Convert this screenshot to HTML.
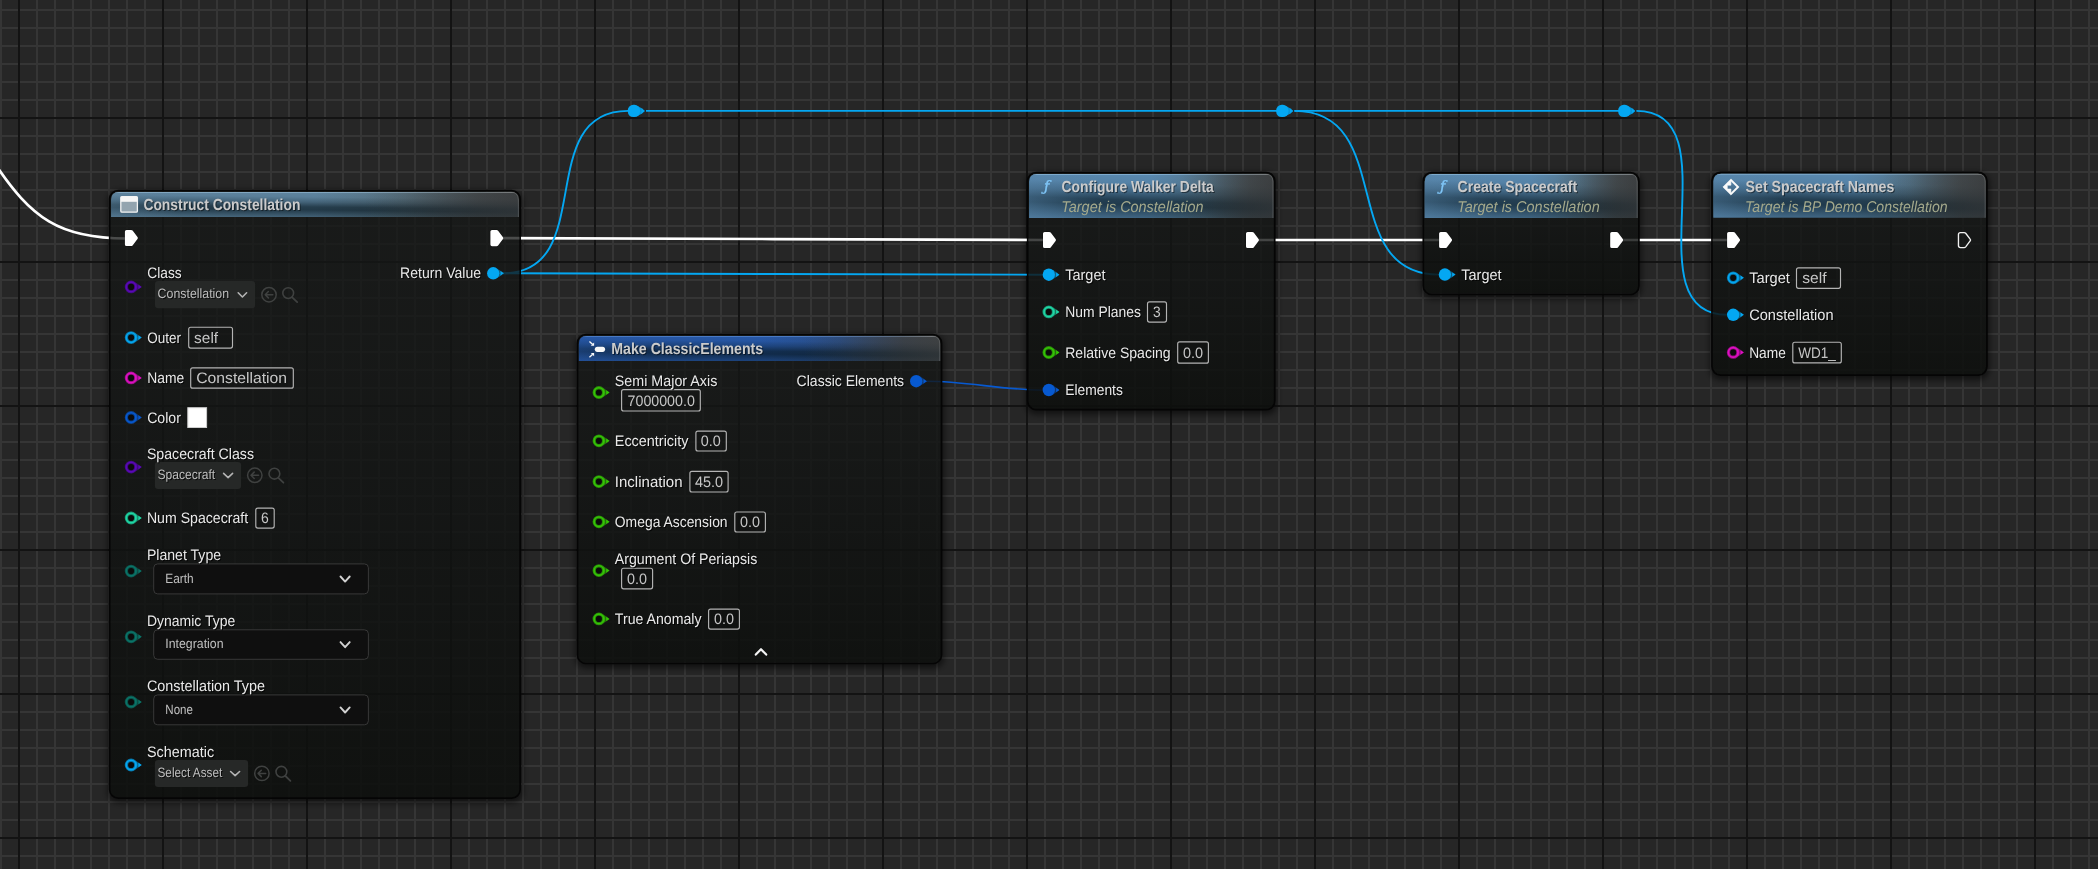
<!DOCTYPE html>
<html lang="en">
<head>
<meta charset="utf-8">
<title>Blueprint Graph</title>
<style>
html,body{margin:0;padding:0;background:#262626;overflow:hidden}
body{width:2098px;height:869px}
svg{display:block;font-family:"Liberation Sans", sans-serif;text-rendering:geometricPrecision;will-change:transform}
</style>
</head>
<body>
<svg width="2098" height="869" viewBox="0 0 2098 869">
<defs>
<filter id="blur" x="-10%" y="-10%" width="120%" height="120%"><feGaussianBlur stdDeviation="3.4"/></filter>
<pattern id="gmin" x="0" y="9" width="18" height="18" patternUnits="userSpaceOnUse"><rect width="18" height="18" fill="#262626"/><rect width="2" height="18" fill="#353535"/><rect width="18" height="2" fill="#353535"/></pattern>
<pattern id="gmaj" x="18" y="117" width="144" height="144" patternUnits="userSpaceOnUse"><rect width="2" height="144" fill="#131313"/><rect width="144" height="2" fill="#131313"/></pattern>
<linearGradient id="body" x1="0" y1="0" x2="0" y2="1"><stop offset="0" stop-color="#151716" stop-opacity="0.76"/><stop offset="0.5" stop-color="#111312" stop-opacity="0.82"/><stop offset="1" stop-color="#0d0f0d" stop-opacity="0.88"/></linearGradient>
<linearGradient id="tshade" x1="0.18" y1="0" x2="0" y2="1"><stop offset="0" stop-color="#06161f" stop-opacity="0"/><stop offset="0.17" stop-color="#06161f" stop-opacity="0.05"/><stop offset="0.36" stop-color="#06161f" stop-opacity="0.30"/><stop offset="0.54" stop-color="#06161f" stop-opacity="0.64"/><stop offset="0.65" stop-color="#06161f" stop-opacity="0.68"/><stop offset="0.82" stop-color="#06161f" stop-opacity="0.45"/><stop offset="1" stop-color="#06161f" stop-opacity="0.2"/></linearGradient>
<linearGradient id="rim" gradientUnits="objectBoundingBox" x1="0" y1="0" x2="1" y2="0"><stop offset="0" stop-color="#fff" stop-opacity="0"/><stop offset="1" stop-color="#fff" stop-opacity="0.16"/></linearGradient>
<linearGradient id="fadeR" x1="0" y1="0" x2="1" y2="0"><stop offset="0" stop-color="#3a3d3f" stop-opacity="0"/><stop offset="0.62" stop-color="#3a3d3f" stop-opacity="0"/><stop offset="1" stop-color="#3a3d3f" stop-opacity="0.62"/></linearGradient>
<clipPath id="tc1"><path d="M111.1 217.0 V199.8 Q111.1 191.9 119.0 191.9 H510.8 Q518.7 191.9 518.7 199.8 V217.0 Z"/></clipPath>
<linearGradient id="th1" x1="0" y1="0" x2="1" y2="0.0"><stop offset="0" stop-color="#5e849f"/><stop offset="0.5" stop-color="#5e849f"/><stop offset="0.72" stop-color="#58717f"/><stop offset="0.9" stop-color="#474d50"/><stop offset="1" stop-color="#3f4142"/></linearGradient>
<linearGradient id="hl1" x1="0" y1="0" x2="1" y2="0"><stop offset="0" stop-color="#93b7d0"/><stop offset="0.6" stop-color="#93b7d0"/><stop offset="1" stop-color="#7c7e7e"/></linearGradient>
<linearGradient id="lf1" gradientUnits="userSpaceOnUse" x1="110.2" y1="0" x2="180.2" y2="0"><stop offset="0" stop-color="#5e849f" stop-opacity="0.42"/><stop offset="1" stop-color="#5e849f" stop-opacity="0"/></linearGradient>
<clipPath id="tc2"><path d="M578.9 361.0 V343.8 Q578.9 335.9 586.8 335.9 H932.2 Q940.1 335.9 940.1 343.8 V361.0 Z"/></clipPath>
<linearGradient id="th2" x1="0" y1="0" x2="1" y2="0.0"><stop offset="0" stop-color="#2758a8"/><stop offset="0.5" stop-color="#2758a8"/><stop offset="0.72" stop-color="#2b4f88"/><stop offset="0.9" stop-color="#3c444f"/><stop offset="1" stop-color="#444646"/></linearGradient>
<linearGradient id="hl2" x1="0" y1="0" x2="1" y2="0"><stop offset="0" stop-color="#5a8ad0"/><stop offset="0.6" stop-color="#5a8ad0"/><stop offset="1" stop-color="#7c7e7e"/></linearGradient>
<linearGradient id="lf2" gradientUnits="userSpaceOnUse" x1="578.0" y1="0" x2="648.0" y2="0"><stop offset="0" stop-color="#2758a8" stop-opacity="0.42"/><stop offset="1" stop-color="#2758a8" stop-opacity="0"/></linearGradient>
<clipPath id="tc3"><path d="M1029.1 218.0 V181.8 Q1029.1 173.9 1037.0 173.9 H1265.4 Q1273.3 173.9 1273.3 181.8 V218.0 Z"/></clipPath>
<linearGradient id="th3" x1="0" y1="0" x2="1" y2="0.0"><stop offset="0" stop-color="#5988ae"/><stop offset="0.5" stop-color="#5988ae"/><stop offset="0.72" stop-color="#55768c"/><stop offset="0.9" stop-color="#474f53"/><stop offset="1" stop-color="#3f4142"/></linearGradient>
<linearGradient id="hl3" x1="0" y1="0" x2="1" y2="0"><stop offset="0" stop-color="#8fbbdc"/><stop offset="0.6" stop-color="#8fbbdc"/><stop offset="1" stop-color="#7c7e7e"/></linearGradient>
<linearGradient id="lf3" gradientUnits="userSpaceOnUse" x1="1028.2" y1="0" x2="1098.2" y2="0"><stop offset="0" stop-color="#5988ae" stop-opacity="0.42"/><stop offset="1" stop-color="#5988ae" stop-opacity="0"/></linearGradient>
<clipPath id="tc4"><path d="M1424.7 218.0 V181.8 Q1424.7 173.9 1432.6 173.9 H1629.6 Q1637.5 173.9 1637.5 181.8 V218.0 Z"/></clipPath>
<linearGradient id="th4" x1="0" y1="0" x2="1" y2="0.0"><stop offset="0" stop-color="#5988ae"/><stop offset="0.5" stop-color="#5988ae"/><stop offset="0.72" stop-color="#55768c"/><stop offset="0.9" stop-color="#474f53"/><stop offset="1" stop-color="#3f4142"/></linearGradient>
<linearGradient id="hl4" x1="0" y1="0" x2="1" y2="0"><stop offset="0" stop-color="#8fbbdc"/><stop offset="0.6" stop-color="#8fbbdc"/><stop offset="1" stop-color="#7c7e7e"/></linearGradient>
<linearGradient id="lf4" gradientUnits="userSpaceOnUse" x1="1423.8" y1="0" x2="1493.8" y2="0"><stop offset="0" stop-color="#5988ae" stop-opacity="0.42"/><stop offset="1" stop-color="#5988ae" stop-opacity="0"/></linearGradient>
<clipPath id="tc5"><path d="M1713.4 217.8 V181.6 Q1713.4 173.7 1721.3 173.7 H1977.6 Q1985.5 173.7 1985.5 181.6 V217.8 Z"/></clipPath>
<linearGradient id="th5" x1="0" y1="0" x2="1" y2="0.0"><stop offset="0" stop-color="#5988ae"/><stop offset="0.5" stop-color="#5988ae"/><stop offset="0.72" stop-color="#55768c"/><stop offset="0.9" stop-color="#474f53"/><stop offset="1" stop-color="#3f4142"/></linearGradient>
<linearGradient id="hl5" x1="0" y1="0" x2="1" y2="0"><stop offset="0" stop-color="#8fbbdc"/><stop offset="0.6" stop-color="#8fbbdc"/><stop offset="1" stop-color="#7c7e7e"/></linearGradient>
<linearGradient id="lf5" gradientUnits="userSpaceOnUse" x1="1712.5" y1="0" x2="1782.5" y2="0"><stop offset="0" stop-color="#5988ae" stop-opacity="0.42"/><stop offset="1" stop-color="#5988ae" stop-opacity="0"/></linearGradient>
</defs>
<rect width="2098" height="869" fill="url(#gmin)"/>
<rect width="2098" height="869" fill="url(#gmaj)"/>
<rect x="107.7" y="190.5" width="414.9" height="612.5" rx="10" fill="#000" fill-opacity="0.55" filter="url(#blur)"/>
<rect x="575.5" y="334.5" width="368.5" height="333.8" rx="10" fill="#000" fill-opacity="0.55" filter="url(#blur)"/>
<rect x="1025.7" y="172.5" width="251.5" height="241.9" rx="10" fill="#000" fill-opacity="0.55" filter="url(#blur)"/>
<rect x="1421.3" y="172.5" width="220.1" height="126.8" rx="10" fill="#000" fill-opacity="0.55" filter="url(#blur)"/>
<rect x="1710.0" y="172.3" width="279.4" height="207.6" rx="10" fill="#000" fill-opacity="0.55" filter="url(#blur)"/>
<rect x="110.2" y="191.0" width="409.4" height="606.5" rx="8" fill="url(#gmin)"/>
<rect x="110.2" y="191.0" width="409.4" height="606.5" rx="8" fill="url(#gmaj)"/>
<rect x="578.0" y="335.0" width="363.0" height="327.8" rx="8" fill="url(#gmin)"/>
<rect x="578.0" y="335.0" width="363.0" height="327.8" rx="8" fill="url(#gmaj)"/>
<rect x="1028.2" y="173.0" width="246.0" height="235.9" rx="8" fill="url(#gmin)"/>
<rect x="1028.2" y="173.0" width="246.0" height="235.9" rx="8" fill="url(#gmaj)"/>
<rect x="1423.8" y="173.0" width="214.6" height="120.8" rx="8" fill="url(#gmin)"/>
<rect x="1423.8" y="173.0" width="214.6" height="120.8" rx="8" fill="url(#gmaj)"/>
<rect x="1712.5" y="172.8" width="273.9" height="201.6" rx="8" fill="url(#gmin)"/>
<rect x="1712.5" y="172.8" width="273.9" height="201.6" rx="8" fill="url(#gmaj)"/>
<path d="M-6 162.4 C31.1 218.3 59.5 238.5 126 238.5" fill="none" stroke="#fff" stroke-width="2.7"/>
<path d="M503.0 238.1 C683.8 238.1 862.7 240.0 1043.5 240.0" fill="none" stroke="#ffffff" stroke-width="2.7"/>
<path d="M1258.5 240.0 C1318.8 240.0 1379.2 240.0 1439.5 240.0" fill="none" stroke="#ffffff" stroke-width="2.7"/>
<path d="M1623.0 240.0 C1657.8 240.0 1692.7 240.0 1727.5 240.0" fill="none" stroke="#ffffff" stroke-width="2.7"/>
<path d="M503.0 273.3 C683.4 273.3 862.4 274.7 1042.8 274.7" fill="none" stroke="#04a7f2" stroke-width="1.9"/>
<path d="M503.0 273.3 C598.8 273.3 532.2 110.9 628.0 110.9" fill="none" stroke="#04a7f2" stroke-width="1.9"/>
<path d="M646.0 110.9 C857.3 110.9 1068.7 110.9 1280.0 110.9" fill="none" stroke="#04a7f2" stroke-width="1.9"/>
<path d="M1294.4 110.9 C1403.6 110.9 1512.8 110.9 1622.0 110.9" fill="none" stroke="#04a7f2" stroke-width="1.9"/>
<path d="M1294.4 110.9 C1397.2 110.9 1336.2 274.6 1439.0 274.6" fill="none" stroke="#04a7f2" stroke-width="1.9"/>
<path d="M1636.4 110.9 C1734.7 110.9 1629.2 314.8 1727.5 314.8" fill="none" stroke="#04a7f2" stroke-width="1.9"/>
<path d="M926.0 381.2 C967.9 381.2 1000.9 390.0 1042.8 390.0" fill="none" stroke="#0759d0" stroke-width="1.6"/>
<rect x="110.2" y="191.0" width="409.4" height="606.5" rx="8" fill="url(#body)"/>
<rect x="109.7" y="190.5" width="410.4" height="607.7" rx="8.5" fill="none" stroke="#050505" stroke-width="1.7"/>
<g clip-path="url(#tc1)">
<rect x="110.2" y="191.0" width="409.4" height="26.0" fill="url(#th1)"/>
<rect x="110.2" y="191.0" width="409.4" height="26.0" fill="url(#tshade)"/>
<rect x="110.2" y="193.0" width="70" height="24.0" fill="url(#lf1)"/>
<rect x="110.2" y="193.0" width="409.4" height="24.0" fill="url(#fadeR)"/>
<rect x="110.2" y="191.7" width="409.4" height="1.1" fill="url(#hl1)" fill-opacity="0.85"/>
</g>
<path d="M479.6 192.2 H510.8 Q518.4 192.2 518.4 199.8 V217.0" fill="none" stroke="url(#rim)" stroke-width="1"/>
<rect x="578.0" y="335.0" width="363.0" height="327.8" rx="8" fill="url(#body)"/>
<rect x="577.5" y="334.5" width="364.0" height="329.0" rx="8.5" fill="none" stroke="#050505" stroke-width="1.7"/>
<g clip-path="url(#tc2)">
<rect x="578.0" y="335.0" width="363.0" height="26.0" fill="url(#th2)"/>
<rect x="578.0" y="335.0" width="363.0" height="26.0" fill="url(#tshade)"/>
<rect x="578.0" y="337.0" width="70" height="24.0" fill="url(#lf2)"/>
<rect x="578.0" y="337.0" width="363.0" height="24.0" fill="url(#fadeR)"/>
<rect x="578.0" y="335.7" width="363.0" height="1.1" fill="url(#hl2)" fill-opacity="0.85"/>
</g>
<path d="M901.0 336.2 H932.2 Q939.8 336.2 939.8 343.8 V361.0" fill="none" stroke="url(#rim)" stroke-width="1"/>
<rect x="1028.2" y="173.0" width="246.0" height="235.9" rx="8" fill="url(#body)"/>
<rect x="1027.7" y="172.5" width="247.0" height="237.1" rx="8.5" fill="none" stroke="#050505" stroke-width="1.7"/>
<g clip-path="url(#tc3)">
<rect x="1028.2" y="173.0" width="246.0" height="45.0" fill="url(#th3)"/>
<rect x="1028.2" y="173.0" width="246.0" height="45.0" fill="url(#tshade)"/>
<rect x="1028.2" y="175.0" width="70" height="43.0" fill="url(#lf3)"/>
<rect x="1028.2" y="175.0" width="246.0" height="43.0" fill="url(#fadeR)"/>
<rect x="1028.2" y="173.7" width="246.0" height="1.1" fill="url(#hl3)" fill-opacity="0.85"/>
</g>
<path d="M1234.2 174.2 H1265.4 Q1273.0 174.2 1273.0 181.8 V218.0" fill="none" stroke="url(#rim)" stroke-width="1"/>
<rect x="1423.8" y="173.0" width="214.6" height="120.8" rx="8" fill="url(#body)"/>
<rect x="1423.3" y="172.5" width="215.6" height="122.0" rx="8.5" fill="none" stroke="#050505" stroke-width="1.7"/>
<g clip-path="url(#tc4)">
<rect x="1423.8" y="173.0" width="214.6" height="45.0" fill="url(#th4)"/>
<rect x="1423.8" y="173.0" width="214.6" height="45.0" fill="url(#tshade)"/>
<rect x="1423.8" y="175.0" width="70" height="43.0" fill="url(#lf4)"/>
<rect x="1423.8" y="175.0" width="214.6" height="43.0" fill="url(#fadeR)"/>
<rect x="1423.8" y="173.7" width="214.6" height="1.1" fill="url(#hl4)" fill-opacity="0.85"/>
</g>
<path d="M1598.4 174.2 H1629.6 Q1637.2 174.2 1637.2 181.8 V218.0" fill="none" stroke="url(#rim)" stroke-width="1"/>
<rect x="1712.5" y="172.8" width="273.9" height="201.6" rx="8" fill="url(#body)"/>
<rect x="1712.0" y="172.3" width="274.9" height="202.8" rx="8.5" fill="none" stroke="#050505" stroke-width="1.7"/>
<g clip-path="url(#tc5)">
<rect x="1712.5" y="172.8" width="273.9" height="45.0" fill="url(#th5)"/>
<rect x="1712.5" y="172.8" width="273.9" height="45.0" fill="url(#tshade)"/>
<rect x="1712.5" y="174.8" width="70" height="43.0" fill="url(#lf5)"/>
<rect x="1712.5" y="174.8" width="273.9" height="43.0" fill="url(#fadeR)"/>
<rect x="1712.5" y="173.5" width="273.9" height="1.1" fill="url(#hl5)" fill-opacity="0.85"/>
</g>
<path d="M1946.4 174.0 H1977.6 Q1985.2 174.0 1985.2 181.6 V217.8" fill="none" stroke="url(#rim)" stroke-width="1"/>
<rect x="120.8" y="196.6" width="16.6" height="15.6" rx="1.2" fill="#93a4af" stroke="#f4f4f4" stroke-width="1.3"/>
<rect x="120.8" y="196.6" width="16.6" height="5.2" fill="#f6f6f6"/>
<path d="M126.50 229.90 L131.10 229.90 Q132.00 229.90 132.60 230.60 L137.50 237.10 Q138.30 238.00 137.50 238.90 L132.60 245.40 Q132.00 246.10 131.10 246.10 L126.50 246.10 Q124.90 246.10 124.90 244.50 L124.90 231.50 Q124.90 229.90 126.50 229.90 Z" fill="#ffffff" stroke="#000" stroke-opacity="0.35" stroke-width="1" paint-order="stroke"/>
<path d="M492.00 230.00 L496.60 230.00 Q497.50 230.00 498.10 230.70 L503.00 237.20 Q503.80 238.10 503.00 239.00 L498.10 245.50 Q497.50 246.20 496.60 246.20 L492.00 246.20 Q490.40 246.20 490.40 244.60 L490.40 231.60 Q490.40 230.00 492.00 230.00 Z" fill="#ffffff" stroke="#000" stroke-opacity="0.35" stroke-width="1" paint-order="stroke"/>
<path d="M135.5 282.5 L139.1 284.8 L141.7 286.9 L139.1 289.0 L135.5 291.3 Z" fill="#5a08b8" fill-opacity="0.5"/>
<path d="M138.4 284.7 L141.7 286.9 L138.4 289.1 Z" fill="#5a08b8"/>
<ellipse cx="131.1" cy="286.9" rx="4.7" ry="4.75" fill="#0b0b0b" stroke="#5a08b8" stroke-opacity="0.66" stroke-width="3.3"/>
<ellipse cx="131.1" cy="286.9" rx="4.75" ry="4.8" fill="none" stroke="#5a08b8" stroke-width="1.6"/>
<rect x="155.0" y="281.1" width="100.1" height="27.1" rx="3.2" fill="#262827"/>
<path d="M238.2 292.8 L242.4 297.0 L246.6 292.8" fill="none" stroke="#b4b4b4" stroke-width="1.6" stroke-linecap="round" stroke-linejoin="round"/>
<circle cx="269.0" cy="294.7" r="7.2" fill="none" stroke="#3f4140" stroke-width="1.5"/>
<path d="M272.8 294.7 H265.4 M268.4 291.5 L265.2 294.7 L268.4 297.9" fill="none" stroke="#3f4140" stroke-width="1.5" stroke-linecap="round" stroke-linejoin="round"/>
<circle cx="288.2" cy="293.1" r="5.4" fill="none" stroke="#3f4140" stroke-width="1.6"/>
<path d="M292.2 297.3 L297.2 302.1" stroke="#3f4140" stroke-width="1.8" stroke-linecap="round"/>
<path d="M497.6 268.9 L501.2 271.2 L503.8 273.3 L501.2 275.4 L497.6 277.7 Z" fill="#04a7f2" fill-opacity="0.5"/>
<path d="M500.5 271.1 L503.8 273.3 L500.5 275.5 Z" fill="#04a7f2"/>
<ellipse cx="493.2" cy="273.3" rx="6.15" ry="6.25" fill="#04a7f2"/>
<path d="M135.5 333.2 L139.1 335.5 L141.7 337.6 L139.1 339.7 L135.5 342.0 Z" fill="#04a7f2" fill-opacity="0.5"/>
<path d="M138.4 335.4 L141.7 337.6 L138.4 339.8 Z" fill="#04a7f2"/>
<ellipse cx="131.1" cy="337.6" rx="4.7" ry="4.75" fill="#0b0b0b" stroke="#04a7f2" stroke-opacity="0.66" stroke-width="3.3"/>
<ellipse cx="131.1" cy="337.6" rx="4.75" ry="4.8" fill="none" stroke="#04a7f2" stroke-width="1.6"/>
<rect x="188.7" y="327.2" width="43.8" height="20.9" rx="2" fill="#0d0e0e" fill-opacity="0.15" stroke="#b4b4b4" stroke-width="1.15"/>
<path d="M135.5 373.5 L139.1 375.8 L141.7 377.9 L139.1 380.0 L135.5 382.3 Z" fill="#e00fc4" fill-opacity="0.5"/>
<path d="M138.4 375.7 L141.7 377.9 L138.4 380.1 Z" fill="#e00fc4"/>
<ellipse cx="131.1" cy="377.9" rx="4.7" ry="4.75" fill="#0b0b0b" stroke="#e00fc4" stroke-opacity="0.66" stroke-width="3.3"/>
<ellipse cx="131.1" cy="377.9" rx="4.75" ry="4.8" fill="none" stroke="#e00fc4" stroke-width="1.6"/>
<rect x="190.7" y="367.8" width="102.6" height="20.4" rx="2" fill="#0d0e0e" fill-opacity="0.15" stroke="#b4b4b4" stroke-width="1.15"/>
<path d="M135.5 413.1 L139.1 415.4 L141.7 417.5 L139.1 419.6 L135.5 421.9 Z" fill="#0759d0" fill-opacity="0.5"/>
<path d="M138.4 415.3 L141.7 417.5 L138.4 419.7 Z" fill="#0759d0"/>
<ellipse cx="131.1" cy="417.5" rx="4.7" ry="4.75" fill="#0b0b0b" stroke="#0759d0" stroke-opacity="0.66" stroke-width="3.3"/>
<ellipse cx="131.1" cy="417.5" rx="4.75" ry="4.8" fill="none" stroke="#0759d0" stroke-width="1.6"/>
<rect x="187.8" y="407.7" width="18.8" height="19.8" fill="#ffffff" stroke="#cfcfcf" stroke-width="1"/>
<path d="M135.5 462.7 L139.1 465.0 L141.7 467.1 L139.1 469.2 L135.5 471.5 Z" fill="#5a08b8" fill-opacity="0.5"/>
<path d="M138.4 464.9 L141.7 467.1 L138.4 469.3 Z" fill="#5a08b8"/>
<ellipse cx="131.1" cy="467.1" rx="4.7" ry="4.75" fill="#0b0b0b" stroke="#5a08b8" stroke-opacity="0.66" stroke-width="3.3"/>
<ellipse cx="131.1" cy="467.1" rx="4.75" ry="4.8" fill="none" stroke="#5a08b8" stroke-width="1.6"/>
<rect x="154.9" y="462.1" width="86.2" height="26.8" rx="3.2" fill="#262827"/>
<path d="M223.6 473.4 L228.1 477.6 L232.6 473.4" fill="none" stroke="#b4b4b4" stroke-width="1.6" stroke-linecap="round" stroke-linejoin="round"/>
<circle cx="254.8" cy="475.3" r="7.2" fill="none" stroke="#3f4140" stroke-width="1.5"/>
<path d="M258.6 475.3 H251.2 M254.2 472.1 L251.0 475.3 L254.2 478.5" fill="none" stroke="#3f4140" stroke-width="1.5" stroke-linecap="round" stroke-linejoin="round"/>
<circle cx="274.4" cy="473.7" r="5.4" fill="none" stroke="#3f4140" stroke-width="1.6"/>
<path d="M278.4 477.9 L283.4 482.7" stroke="#3f4140" stroke-width="1.8" stroke-linecap="round"/>
<path d="M135.5 513.6 L139.1 515.9 L141.7 518.0 L139.1 520.1 L135.5 522.4 Z" fill="#1fd8a6" fill-opacity="0.5"/>
<path d="M138.4 515.8 L141.7 518.0 L138.4 520.2 Z" fill="#1fd8a6"/>
<ellipse cx="131.1" cy="518.0" rx="4.7" ry="4.75" fill="#0b0b0b" stroke="#1fd8a6" stroke-opacity="0.66" stroke-width="3.3"/>
<ellipse cx="131.1" cy="518.0" rx="4.75" ry="4.8" fill="none" stroke="#1fd8a6" stroke-width="1.6"/>
<rect x="255.8" y="508.1" width="18.4" height="20.0" rx="2" fill="#0d0e0e" fill-opacity="0.15" stroke="#b4b4b4" stroke-width="1.15"/>
<path d="M135.5 566.7 L139.1 569.0 L141.7 571.1 L139.1 573.2 L135.5 575.5 Z" fill="#0a7468" fill-opacity="0.5"/>
<path d="M138.4 568.9 L141.7 571.1 L138.4 573.3 Z" fill="#0a7468"/>
<ellipse cx="131.1" cy="571.1" rx="4.7" ry="4.75" fill="#0b0b0b" stroke="#0a7468" stroke-opacity="0.66" stroke-width="3.3"/>
<ellipse cx="131.1" cy="571.1" rx="4.75" ry="4.8" fill="none" stroke="#0a7468" stroke-width="1.6"/>
<rect x="153.7" y="563.9" width="214.7" height="30.0" rx="4" fill="#0f0f0f" stroke="#383838" stroke-width="1"/>
<path d="M340.5 576.5 L345.1 581.6 L349.7 576.5" fill="none" stroke="#d2d2d2" stroke-width="1.9" stroke-linecap="round" stroke-linejoin="round"/>
<path d="M135.5 632.4 L139.1 634.7 L141.7 636.8 L139.1 638.9 L135.5 641.2 Z" fill="#0a7468" fill-opacity="0.5"/>
<path d="M138.4 634.6 L141.7 636.8 L138.4 639.0 Z" fill="#0a7468"/>
<ellipse cx="131.1" cy="636.8" rx="4.7" ry="4.75" fill="#0b0b0b" stroke="#0a7468" stroke-opacity="0.66" stroke-width="3.3"/>
<ellipse cx="131.1" cy="636.8" rx="4.75" ry="4.8" fill="none" stroke="#0a7468" stroke-width="1.6"/>
<rect x="153.7" y="629.8" width="214.7" height="29.5" rx="4" fill="#0f0f0f" stroke="#383838" stroke-width="1"/>
<path d="M340.5 642.1 L345.1 647.2 L349.7 642.1" fill="none" stroke="#d2d2d2" stroke-width="1.9" stroke-linecap="round" stroke-linejoin="round"/>
<path d="M135.5 697.6 L139.1 699.9 L141.7 702.0 L139.1 704.1 L135.5 706.4 Z" fill="#0a7468" fill-opacity="0.5"/>
<path d="M138.4 699.8 L141.7 702.0 L138.4 704.2 Z" fill="#0a7468"/>
<ellipse cx="131.1" cy="702.0" rx="4.7" ry="4.75" fill="#0b0b0b" stroke="#0a7468" stroke-opacity="0.66" stroke-width="3.3"/>
<ellipse cx="131.1" cy="702.0" rx="4.75" ry="4.8" fill="none" stroke="#0a7468" stroke-width="1.6"/>
<rect x="153.7" y="694.9" width="214.7" height="29.9" rx="4" fill="#0f0f0f" stroke="#383838" stroke-width="1"/>
<path d="M340.5 707.4 L345.1 712.5 L349.7 707.4" fill="none" stroke="#d2d2d2" stroke-width="1.9" stroke-linecap="round" stroke-linejoin="round"/>
<path d="M135.5 760.6 L139.1 762.9 L141.7 765.0 L139.1 767.1 L135.5 769.4 Z" fill="#04a7f2" fill-opacity="0.5"/>
<path d="M138.4 762.8 L141.7 765.0 L138.4 767.2 Z" fill="#04a7f2"/>
<ellipse cx="131.1" cy="765.0" rx="4.7" ry="4.75" fill="#0b0b0b" stroke="#04a7f2" stroke-opacity="0.66" stroke-width="3.3"/>
<ellipse cx="131.1" cy="765.0" rx="4.75" ry="4.8" fill="none" stroke="#04a7f2" stroke-width="1.6"/>
<rect x="154.9" y="760.1" width="93.2" height="26.8" rx="3.2" fill="#262827"/>
<path d="M230.6 771.5 L235.1 775.7 L239.6 771.5" fill="none" stroke="#b4b4b4" stroke-width="1.6" stroke-linecap="round" stroke-linejoin="round"/>
<circle cx="261.9" cy="773.4" r="7.2" fill="none" stroke="#3f4140" stroke-width="1.5"/>
<path d="M265.7 773.4 H258.3 M261.3 770.2 L258.1 773.4 L261.3 776.6" fill="none" stroke="#3f4140" stroke-width="1.5" stroke-linecap="round" stroke-linejoin="round"/>
<circle cx="281.4" cy="771.8" r="5.4" fill="none" stroke="#3f4140" stroke-width="1.6"/>
<path d="M285.4 776.0 L290.4 780.8" stroke="#3f4140" stroke-width="1.8" stroke-linecap="round"/>
<g fill="#f8f8f8" stroke="none"><path d="M589.0 341.9 L589.9 341.0 L593.2 344.0 L592.2 345.0 Z"/><path d="M594.1 342.5 V345.8 H590.8 Z"/><path d="M589.0 356.8 L589.9 357.7 L593.2 354.7 L592.2 353.7 Z"/><path d="M594.1 356.2 V352.9 H590.8 Z"/><rect x="594.8" y="346.8" width="10.3" height="5.1" rx="2.55"/></g>
<path d="M603.3 388.1 L606.9 390.4 L609.5 392.5 L606.9 394.6 L603.3 396.9 Z" fill="#35c406" fill-opacity="0.5"/>
<path d="M606.2 390.3 L609.5 392.5 L606.2 394.7 Z" fill="#35c406"/>
<ellipse cx="598.9" cy="392.5" rx="4.7" ry="4.75" fill="#0b0b0b" stroke="#35c406" stroke-opacity="0.66" stroke-width="3.3"/>
<ellipse cx="598.9" cy="392.5" rx="4.75" ry="4.8" fill="none" stroke="#35c406" stroke-width="1.6"/>
<rect x="621.6" y="389.6" width="78.7" height="21.4" rx="2" fill="#0d0e0e" fill-opacity="0.15" stroke="#b4b4b4" stroke-width="1.15"/>
<path d="M920.6 376.8 L924.2 379.1 L926.8 381.2 L924.2 383.3 L920.6 385.6 Z" fill="#0759d0" fill-opacity="0.5"/>
<path d="M923.5 379.0 L926.8 381.2 L923.5 383.4 Z" fill="#0759d0"/>
<ellipse cx="916.2" cy="381.2" rx="6.15" ry="6.25" fill="#0759d0"/>
<path d="M603.3 436.4 L606.9 438.7 L609.5 440.8 L606.9 442.9 L603.3 445.2 Z" fill="#35c406" fill-opacity="0.5"/>
<path d="M606.2 438.6 L609.5 440.8 L606.2 443.0 Z" fill="#35c406"/>
<ellipse cx="598.9" cy="440.8" rx="4.7" ry="4.75" fill="#0b0b0b" stroke="#35c406" stroke-opacity="0.66" stroke-width="3.3"/>
<ellipse cx="598.9" cy="440.8" rx="4.75" ry="4.8" fill="none" stroke="#35c406" stroke-width="1.6"/>
<rect x="695.9" y="431.1" width="30.4" height="19.9" rx="2" fill="#0d0e0e" fill-opacity="0.15" stroke="#b4b4b4" stroke-width="1.15"/>
<path d="M603.3 477.2 L606.9 479.5 L609.5 481.6 L606.9 483.7 L603.3 486.0 Z" fill="#35c406" fill-opacity="0.5"/>
<path d="M606.2 479.4 L609.5 481.6 L606.2 483.8 Z" fill="#35c406"/>
<ellipse cx="598.9" cy="481.6" rx="4.7" ry="4.75" fill="#0b0b0b" stroke="#35c406" stroke-opacity="0.66" stroke-width="3.3"/>
<ellipse cx="598.9" cy="481.6" rx="4.75" ry="4.8" fill="none" stroke="#35c406" stroke-width="1.6"/>
<rect x="689.9" y="471.3" width="38.2" height="20.7" rx="2" fill="#0d0e0e" fill-opacity="0.15" stroke="#b4b4b4" stroke-width="1.15"/>
<path d="M603.3 517.4 L606.9 519.7 L609.5 521.8 L606.9 523.9 L603.3 526.2 Z" fill="#35c406" fill-opacity="0.5"/>
<path d="M606.2 519.6 L609.5 521.8 L606.2 524.0 Z" fill="#35c406"/>
<ellipse cx="598.9" cy="521.8" rx="4.7" ry="4.75" fill="#0b0b0b" stroke="#35c406" stroke-opacity="0.66" stroke-width="3.3"/>
<ellipse cx="598.9" cy="521.8" rx="4.75" ry="4.8" fill="none" stroke="#35c406" stroke-width="1.6"/>
<rect x="734.8" y="512.0" width="30.6" height="20.0" rx="2" fill="#0d0e0e" fill-opacity="0.15" stroke="#b4b4b4" stroke-width="1.15"/>
<path d="M603.3 566.2 L606.9 568.5 L609.5 570.6 L606.9 572.7 L603.3 575.0 Z" fill="#35c406" fill-opacity="0.5"/>
<path d="M606.2 568.4 L609.5 570.6 L606.2 572.8 Z" fill="#35c406"/>
<ellipse cx="598.9" cy="570.6" rx="4.7" ry="4.75" fill="#0b0b0b" stroke="#35c406" stroke-opacity="0.66" stroke-width="3.3"/>
<ellipse cx="598.9" cy="570.6" rx="4.75" ry="4.8" fill="none" stroke="#35c406" stroke-width="1.6"/>
<rect x="621.6" y="568.2" width="31.0" height="20.6" rx="2" fill="#0d0e0e" fill-opacity="0.15" stroke="#b4b4b4" stroke-width="1.15"/>
<path d="M603.3 614.5 L606.9 616.8 L609.5 618.9 L606.9 621.0 L603.3 623.3 Z" fill="#35c406" fill-opacity="0.5"/>
<path d="M606.2 616.7 L609.5 618.9 L606.2 621.1 Z" fill="#35c406"/>
<ellipse cx="598.9" cy="618.9" rx="4.7" ry="4.75" fill="#0b0b0b" stroke="#35c406" stroke-opacity="0.66" stroke-width="3.3"/>
<ellipse cx="598.9" cy="618.9" rx="4.75" ry="4.8" fill="none" stroke="#35c406" stroke-width="1.6"/>
<rect x="708.6" y="609.1" width="30.8" height="20.0" rx="2" fill="#0d0e0e" fill-opacity="0.15" stroke="#b4b4b4" stroke-width="1.15"/>
<path d="M755.8 654.6 L761 649.2 L766.2 654.6" fill="none" stroke="#f4f4f4" stroke-width="2.2" stroke-linecap="round" stroke-linejoin="round"/>
<text x="1043.9" y="191.2" font-size="14.4" font-style="italic" font-family="DejaVu Serif, serif" fill="#7fc6f8" stroke="#7fc6f8" stroke-width="0.35">ƒ</text>
<path d="M1044.60 231.90 L1049.20 231.90 Q1050.10 231.90 1050.70 232.60 L1055.60 239.10 Q1056.40 240.00 1055.60 240.90 L1050.70 247.40 Q1050.10 248.10 1049.20 248.10 L1044.60 248.10 Q1043.00 248.10 1043.00 246.50 L1043.00 233.50 Q1043.00 231.90 1044.60 231.90 Z" fill="#ffffff" stroke="#000" stroke-opacity="0.35" stroke-width="1" paint-order="stroke"/>
<path d="M1247.60 231.90 L1252.20 231.90 Q1253.10 231.90 1253.70 232.60 L1258.60 239.10 Q1259.40 240.00 1258.60 240.90 L1253.70 247.40 Q1253.10 248.10 1252.20 248.10 L1247.60 248.10 Q1246.00 248.10 1246.00 246.50 L1246.00 233.50 Q1246.00 231.90 1247.60 231.90 Z" fill="#ffffff" stroke="#000" stroke-opacity="0.35" stroke-width="1" paint-order="stroke"/>
<path d="M1053.2 270.3 L1056.8 272.6 L1059.4 274.7 L1056.8 276.8 L1053.2 279.1 Z" fill="#04a7f2" fill-opacity="0.5"/>
<path d="M1056.1 272.5 L1059.4 274.7 L1056.1 276.9 Z" fill="#04a7f2"/>
<ellipse cx="1048.8" cy="274.7" rx="6.15" ry="6.25" fill="#04a7f2"/>
<path d="M1053.2 307.5 L1056.8 309.8 L1059.4 311.9 L1056.8 314.0 L1053.2 316.3 Z" fill="#1fd8a6" fill-opacity="0.5"/>
<path d="M1056.1 309.7 L1059.4 311.9 L1056.1 314.1 Z" fill="#1fd8a6"/>
<ellipse cx="1048.8" cy="311.9" rx="4.7" ry="4.75" fill="#0b0b0b" stroke="#1fd8a6" stroke-opacity="0.66" stroke-width="3.3"/>
<ellipse cx="1048.8" cy="311.9" rx="4.75" ry="4.8" fill="none" stroke="#1fd8a6" stroke-width="1.6"/>
<rect x="1147.5" y="301.9" width="19.0" height="20.2" rx="2" fill="#0d0e0e" fill-opacity="0.15" stroke="#b4b4b4" stroke-width="1.15"/>
<path d="M1053.2 348.1 L1056.8 350.4 L1059.4 352.5 L1056.8 354.6 L1053.2 356.9 Z" fill="#35c406" fill-opacity="0.5"/>
<path d="M1056.1 350.3 L1059.4 352.5 L1056.1 354.7 Z" fill="#35c406"/>
<ellipse cx="1048.8" cy="352.5" rx="4.7" ry="4.75" fill="#0b0b0b" stroke="#35c406" stroke-opacity="0.66" stroke-width="3.3"/>
<ellipse cx="1048.8" cy="352.5" rx="4.75" ry="4.8" fill="none" stroke="#35c406" stroke-width="1.6"/>
<rect x="1177.7" y="341.8" width="30.7" height="21.4" rx="2" fill="#0d0e0e" fill-opacity="0.15" stroke="#b4b4b4" stroke-width="1.15"/>
<path d="M1053.2 385.6 L1056.8 387.9 L1059.4 390.0 L1056.8 392.1 L1053.2 394.4 Z" fill="#0759d0" fill-opacity="0.5"/>
<path d="M1056.1 387.8 L1059.4 390.0 L1056.1 392.2 Z" fill="#0759d0"/>
<ellipse cx="1048.8" cy="390.0" rx="6.15" ry="6.25" fill="#0759d0"/>
<text x="1440.0" y="191.2" font-size="14.4" font-style="italic" font-family="DejaVu Serif, serif" fill="#7fc6f8" stroke="#7fc6f8" stroke-width="0.35">ƒ</text>
<path d="M1440.70 231.90 L1445.30 231.90 Q1446.20 231.90 1446.80 232.60 L1451.70 239.10 Q1452.50 240.00 1451.70 240.90 L1446.80 247.40 Q1446.20 248.10 1445.30 248.10 L1440.70 248.10 Q1439.10 248.10 1439.10 246.50 L1439.10 233.50 Q1439.10 231.90 1440.70 231.90 Z" fill="#ffffff" stroke="#000" stroke-opacity="0.35" stroke-width="1" paint-order="stroke"/>
<path d="M1611.80 231.90 L1616.40 231.90 Q1617.30 231.90 1617.90 232.60 L1622.80 239.10 Q1623.60 240.00 1622.80 240.90 L1617.90 247.40 Q1617.30 248.10 1616.40 248.10 L1611.80 248.10 Q1610.20 248.10 1610.20 246.50 L1610.20 233.50 Q1610.20 231.90 1611.80 231.90 Z" fill="#ffffff" stroke="#000" stroke-opacity="0.35" stroke-width="1" paint-order="stroke"/>
<path d="M1449.3 270.2 L1452.9 272.5 L1455.5 274.6 L1452.9 276.7 L1449.3 279.0 Z" fill="#04a7f2" fill-opacity="0.5"/>
<path d="M1452.2 272.4 L1455.5 274.6 L1452.2 276.8 Z" fill="#04a7f2"/>
<ellipse cx="1444.9" cy="274.6" rx="6.15" ry="6.25" fill="#04a7f2"/>
<path fill-rule="evenodd" fill="#fafafa" stroke="#fafafa" stroke-width="0.6" stroke-linejoin="round" d="M1722.9 187 L1731 178.9 L1739.1 187 L1731 195.1 Z M1727.3 185.2 H1730.9 V181.1 L1736.9 187 L1730.9 192.9 V189 H1727.3 Z"/>
<path d="M1728.70 231.90 L1733.30 231.90 Q1734.20 231.90 1734.80 232.60 L1739.70 239.10 Q1740.50 240.00 1739.70 240.90 L1734.80 247.40 Q1734.20 248.10 1733.30 248.10 L1728.70 248.10 Q1727.10 248.10 1727.10 246.50 L1727.10 233.50 Q1727.10 231.90 1728.70 231.90 Z" fill="#ffffff" stroke="#000" stroke-opacity="0.35" stroke-width="1" paint-order="stroke"/>
<path d="M1960.45 232.55 L1964.20 232.55 Q1965.10 232.55 1965.70 233.25 L1970.15 239.15 Q1970.95 240.05 1970.15 240.95 L1965.70 246.85 Q1965.10 247.55 1964.20 247.55 L1960.45 247.55 Q1958.45 247.55 1958.45 245.55 L1958.45 234.55 Q1958.45 232.55 1960.45 232.55 Z" fill="none" stroke="#f2f2f2" stroke-width="1.35" stroke-linejoin="round"/>
<path d="M1737.6 273.4 L1741.2 275.7 L1743.8 277.8 L1741.2 279.9 L1737.6 282.2 Z" fill="#04a7f2" fill-opacity="0.5"/>
<path d="M1740.5 275.6 L1743.8 277.8 L1740.5 280.0 Z" fill="#04a7f2"/>
<ellipse cx="1733.2" cy="277.8" rx="4.7" ry="4.75" fill="#0b0b0b" stroke="#04a7f2" stroke-opacity="0.66" stroke-width="3.3"/>
<ellipse cx="1733.2" cy="277.8" rx="4.75" ry="4.8" fill="none" stroke="#04a7f2" stroke-width="1.6"/>
<rect x="1796.5" y="267.8" width="44.0" height="20.5" rx="2" fill="#0d0e0e" fill-opacity="0.15" stroke="#b4b4b4" stroke-width="1.15"/>
<path d="M1737.6 310.4 L1741.2 312.7 L1743.8 314.8 L1741.2 316.9 L1737.6 319.2 Z" fill="#04a7f2" fill-opacity="0.5"/>
<path d="M1740.5 312.6 L1743.8 314.8 L1740.5 317.0 Z" fill="#04a7f2"/>
<ellipse cx="1733.2" cy="314.8" rx="6.15" ry="6.25" fill="#04a7f2"/>
<path d="M1737.6 348.0 L1741.2 350.3 L1743.8 352.4 L1741.2 354.5 L1737.6 356.8 Z" fill="#e00fc4" fill-opacity="0.5"/>
<path d="M1740.5 350.2 L1743.8 352.4 L1740.5 354.6 Z" fill="#e00fc4"/>
<ellipse cx="1733.2" cy="352.4" rx="4.7" ry="4.75" fill="#0b0b0b" stroke="#e00fc4" stroke-opacity="0.66" stroke-width="3.3"/>
<ellipse cx="1733.2" cy="352.4" rx="4.75" ry="4.8" fill="none" stroke="#e00fc4" stroke-width="1.6"/>
<rect x="1792.8" y="342.2" width="48.5" height="20.7" rx="2" fill="#0d0e0e" fill-opacity="0.15" stroke="#b4b4b4" stroke-width="1.15"/>
<path d="M637.4 105.9 L642.2 108.4 L644.8 110.9 L642.2 113.4 L637.4 115.9 Z" fill="#04a7f2" fill-opacity="0.85"/>
<path d="M641.5 108.5 L644.8 110.9 L641.5 113.3 Z" fill="#04a7f2"/>
<rect x="627.75" y="104.75" width="12.3" height="12.3" rx="5.6" fill="#04a7f2"/>
<path d="M1285.8 105.9 L1290.6 108.4 L1293.2 110.9 L1290.6 113.4 L1285.8 115.9 Z" fill="#04a7f2" fill-opacity="0.85"/>
<path d="M1289.9 108.5 L1293.2 110.9 L1289.9 113.3 Z" fill="#04a7f2"/>
<rect x="1276.15" y="104.75" width="12.3" height="12.3" rx="5.6" fill="#04a7f2"/>
<path d="M1627.8 105.9 L1632.6 108.4 L1635.2 110.9 L1632.6 113.4 L1627.8 115.9 Z" fill="#04a7f2" fill-opacity="0.85"/>
<path d="M1631.9 108.5 L1635.2 110.9 L1631.9 113.3 Z" fill="#04a7f2"/>
<rect x="1618.15" y="104.75" width="12.3" height="12.3" rx="5.6" fill="#04a7f2"/>
<g class="lbl" style="filter:drop-shadow(1px 1px 0 rgba(0,0,0,0.75))">
<text x="147.3" y="278" font-size="15.2" textLength="34.4" lengthAdjust="spacingAndGlyphs" fill="#e9e9e9">Class</text>
<text x="157.6" y="298" font-size="13.5" textLength="71.5" lengthAdjust="spacingAndGlyphs" fill="#bdbdbd">Constellation</text>
<text x="400.1" y="278" font-size="15.2" textLength="81.0" lengthAdjust="spacingAndGlyphs" fill="#e9e9e9">Return Value</text>
<text x="147.3" y="343" font-size="15.2" textLength="33.8" lengthAdjust="spacingAndGlyphs" fill="#e9e9e9">Outer</text>
<text x="147.2" y="383" font-size="15.2" textLength="37.0" lengthAdjust="spacingAndGlyphs" fill="#e9e9e9">Name</text>
<text x="147.2" y="423" font-size="15.2" textLength="33.7" lengthAdjust="spacingAndGlyphs" fill="#e9e9e9">Color</text>
<text x="146.9" y="459" font-size="15.2" textLength="107.1" lengthAdjust="spacingAndGlyphs" fill="#e9e9e9">Spacecraft Class</text>
<text x="157.5" y="479" font-size="13.5" textLength="57.7" lengthAdjust="spacingAndGlyphs" fill="#bdbdbd">Spacecraft</text>
<text x="146.9" y="523" font-size="15.2" textLength="101.3" lengthAdjust="spacingAndGlyphs" fill="#e9e9e9">Num Spacecraft</text>
<text x="146.9" y="560" font-size="15.2" textLength="74.2" lengthAdjust="spacingAndGlyphs" fill="#e9e9e9">Planet Type</text>
<text x="146.9" y="626" font-size="15.2" textLength="88.4" lengthAdjust="spacingAndGlyphs" fill="#e9e9e9">Dynamic Type</text>
<text x="146.9" y="691" font-size="15.2" textLength="118.2" lengthAdjust="spacingAndGlyphs" fill="#e9e9e9">Constellation Type</text>
<text x="146.9" y="757" font-size="15.2" textLength="67.2" lengthAdjust="spacingAndGlyphs" fill="#e9e9e9">Schematic</text>
<text x="157.5" y="777" font-size="13.5" textLength="64.8" lengthAdjust="spacingAndGlyphs" fill="#bdbdbd">Select Asset</text>
<text x="614.8" y="386" font-size="15.2" textLength="102.5" lengthAdjust="spacingAndGlyphs" fill="#e9e9e9">Semi Major Axis</text>
<text x="796.6" y="386" font-size="15.2" textLength="107.5" lengthAdjust="spacingAndGlyphs" fill="#e9e9e9">Classic Elements</text>
<text x="614.8" y="446" font-size="15.2" textLength="73.7" lengthAdjust="spacingAndGlyphs" fill="#e9e9e9">Eccentricity</text>
<text x="614.8" y="487" font-size="15.2" textLength="67.7" lengthAdjust="spacingAndGlyphs" fill="#e9e9e9">Inclination</text>
<text x="614.8" y="527" font-size="15.2" textLength="112.8" lengthAdjust="spacingAndGlyphs" fill="#e9e9e9">Omega Ascension</text>
<text x="614.8" y="564" font-size="15.2" textLength="142.5" lengthAdjust="spacingAndGlyphs" fill="#e9e9e9">Argument Of Periapsis</text>
<text x="614.8" y="624" font-size="15.2" textLength="86.8" lengthAdjust="spacingAndGlyphs" fill="#e9e9e9">True Anomaly</text>
<text x="1065.2" y="280" font-size="15.2" textLength="40.3" lengthAdjust="spacingAndGlyphs" fill="#e9e9e9">Target</text>
<text x="1065.2" y="317" font-size="15.2" textLength="75.7" lengthAdjust="spacingAndGlyphs" fill="#e9e9e9">Num Planes</text>
<text x="1065.2" y="358" font-size="15.2" textLength="105.5" lengthAdjust="spacingAndGlyphs" fill="#e9e9e9">Relative Spacing</text>
<text x="1065.2" y="395" font-size="15.2" textLength="57.7" lengthAdjust="spacingAndGlyphs" fill="#e9e9e9">Elements</text>
<text x="1461.3" y="280" font-size="15.2" textLength="40.3" lengthAdjust="spacingAndGlyphs" fill="#e9e9e9">Target</text>
<text x="1749.2" y="283" font-size="15.2" textLength="40.7" lengthAdjust="spacingAndGlyphs" fill="#e9e9e9">Target</text>
<text x="1749.2" y="320" font-size="15.2" textLength="84.4" lengthAdjust="spacingAndGlyphs" fill="#e9e9e9">Constellation</text>
<text x="1749.2" y="358" font-size="15.2" textLength="36.7" lengthAdjust="spacingAndGlyphs" fill="#e9e9e9">Name</text>
</g>
<g class="ttl" style="filter:drop-shadow(1px 1px 0 rgba(0,0,0,0.45))">
<text x="143.4" y="210" font-size="16" font-weight="bold" textLength="157.0" lengthAdjust="spacingAndGlyphs" fill="#cbcbcb">Construct Constellation</text>
<text x="611.3" y="354" font-size="16" font-weight="bold" textLength="151.9" lengthAdjust="spacingAndGlyphs" fill="#cbcbcb">Make ClassicElements</text>
<text x="1061.6" y="192" font-size="16" font-weight="bold" textLength="152.2" lengthAdjust="spacingAndGlyphs" fill="#cbcbcb">Configure Walker Delta</text>
<text x="1457.5" y="192" font-size="16" font-weight="bold" textLength="119.7" lengthAdjust="spacingAndGlyphs" fill="#cbcbcb">Create Spacecraft</text>
<text x="1745.6" y="192" font-size="16" font-weight="bold" textLength="148.7" lengthAdjust="spacingAndGlyphs" fill="#cbcbcb">Set Spacecraft Names</text>
</g>
<g class="val">
<text x="194.1" y="343" font-size="15.2" textLength="24.0" lengthAdjust="spacingAndGlyphs" fill="#c6c6c6">self</text>
<text x="196.2" y="383" font-size="15.2" textLength="90.9" lengthAdjust="spacingAndGlyphs" fill="#c6c6c6">Constellation</text>
<text x="261.0" y="523" font-size="15.2" textLength="7.8" lengthAdjust="spacingAndGlyphs" fill="#c6c6c6">6</text>
<text x="165.3" y="583" font-size="13.3" textLength="28.4" lengthAdjust="spacingAndGlyphs" fill="#c0c0c0">Earth</text>
<text x="165.3" y="648" font-size="13.3" textLength="58.2" lengthAdjust="spacingAndGlyphs" fill="#c0c0c0">Integration</text>
<text x="165.3" y="714" font-size="13.3" textLength="27.6" lengthAdjust="spacingAndGlyphs" fill="#c0c0c0">None</text>
<text x="627.6" y="406" font-size="15.2" textLength="67.2" lengthAdjust="spacingAndGlyphs" fill="#c6c6c6">7000000.0</text>
<text x="700.8" y="446" font-size="15.2" textLength="20.0" lengthAdjust="spacingAndGlyphs" fill="#c6c6c6">0.0</text>
<text x="695.0" y="487" font-size="15.2" textLength="28.1" lengthAdjust="spacingAndGlyphs" fill="#c6c6c6">45.0</text>
<text x="739.9" y="527" font-size="15.2" textLength="20.0" lengthAdjust="spacingAndGlyphs" fill="#c6c6c6">0.0</text>
<text x="626.9" y="584" font-size="15.2" textLength="20.0" lengthAdjust="spacingAndGlyphs" fill="#c6c6c6">0.0</text>
<text x="713.9" y="624" font-size="15.2" textLength="20.0" lengthAdjust="spacingAndGlyphs" fill="#c6c6c6">0.0</text>
<text x="1061.3" y="212" font-size="15.6" font-style="italic" textLength="142.3" lengthAdjust="spacingAndGlyphs" fill="#a4a98c">Target is Constellation</text>
<text x="1153.1" y="317" font-size="15.2" textLength="7.7" lengthAdjust="spacingAndGlyphs" fill="#c6c6c6">3</text>
<text x="1182.9" y="358" font-size="15.2" textLength="20.1" lengthAdjust="spacingAndGlyphs" fill="#c6c6c6">0.0</text>
<text x="1457.2" y="212" font-size="15.6" font-style="italic" textLength="142.5" lengthAdjust="spacingAndGlyphs" fill="#a4a98c">Target is Constellation</text>
<text x="1745.0" y="212" font-size="15.6" font-style="italic" textLength="202.6" lengthAdjust="spacingAndGlyphs" fill="#a4a98c">Target is BP Demo Constellation</text>
<text x="1802.2" y="283" font-size="15.2" textLength="24.3" lengthAdjust="spacingAndGlyphs" fill="#c6c6c6">self</text>
<text x="1798.2" y="358" font-size="15.2" textLength="37.6" lengthAdjust="spacingAndGlyphs" fill="#c6c6c6">WD1_</text>
</g>
</svg>
</body>
</html>
